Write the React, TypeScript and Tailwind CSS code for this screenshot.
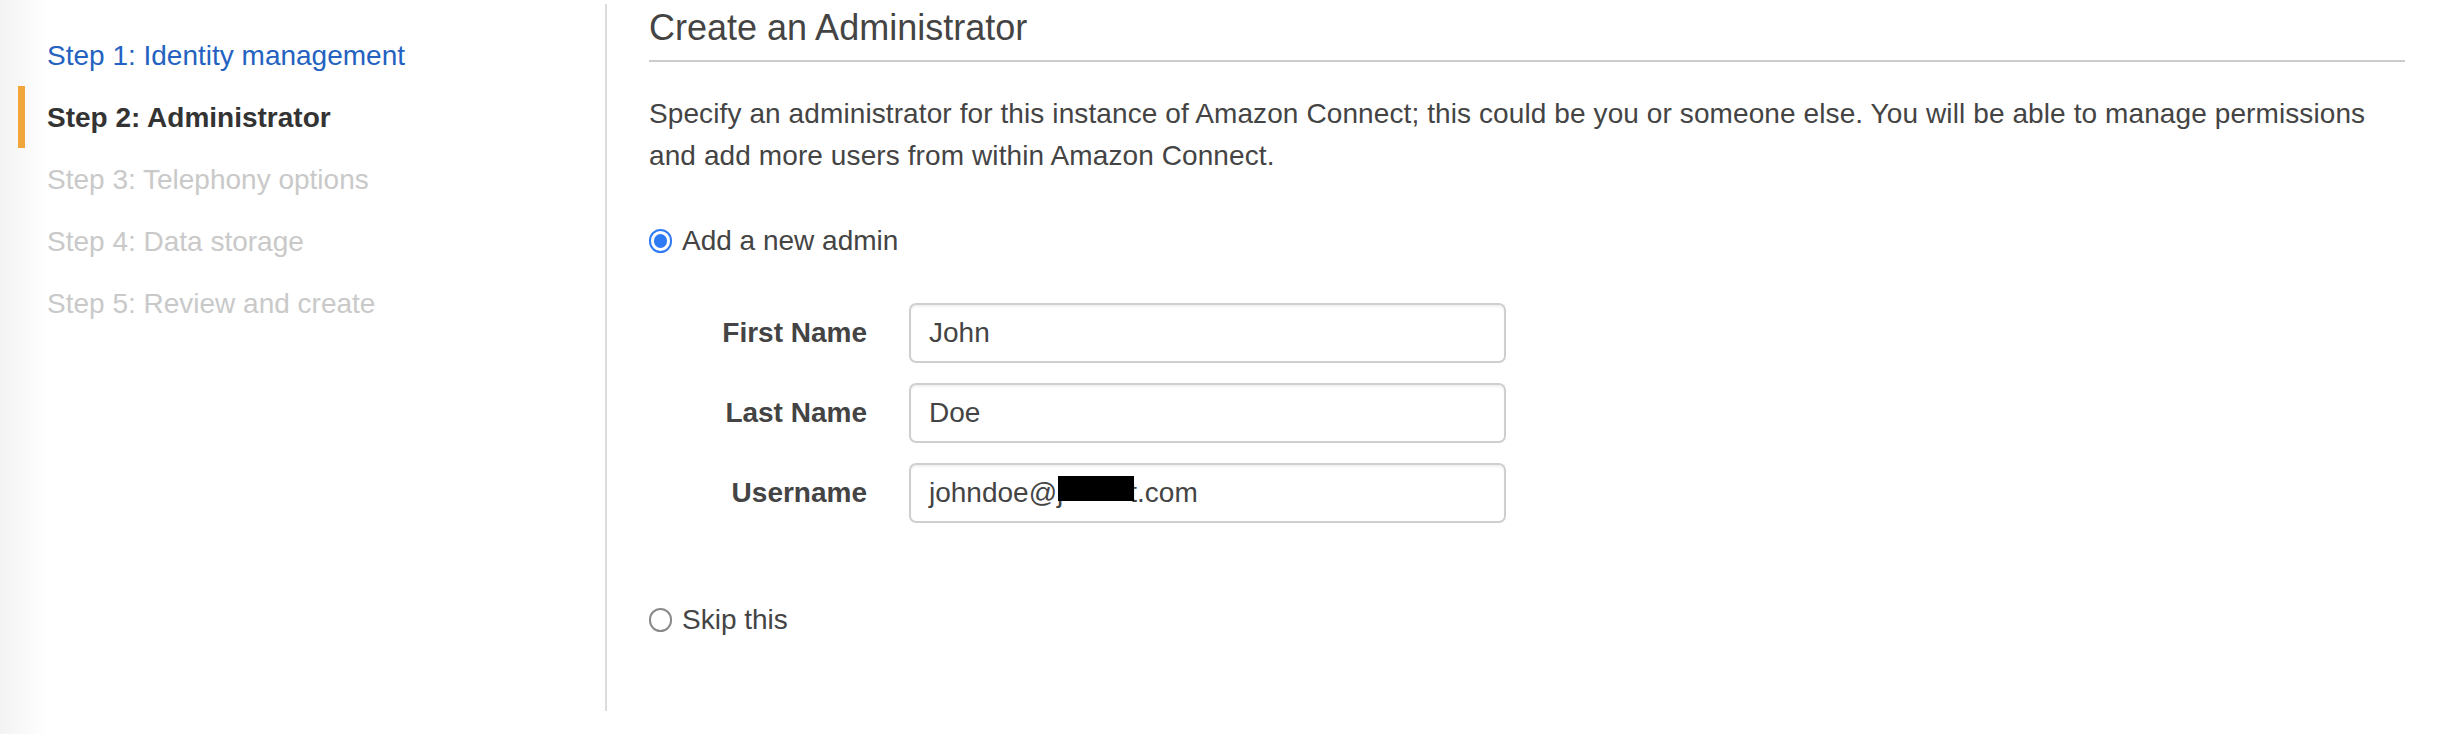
import React from "react";

const steps = [
  { label: "Step 1: Identity management", state: "done" },
  { label: "Step 2: Administrator", state: "active" },
  { label: "Step 3: Telephony options", state: "todo" },
  { label: "Step 4: Data storage", state: "todo" },
  { label: "Step 5: Review and create", state: "todo" },
];

function Radio({ checked }: { checked: boolean }) {
  return checked ? (
    <span className="flex h-[24px] w-[23px] shrink-0 items-center justify-center rounded-full border-[2.5px] border-[#2f7bf5] bg-white">
      <span className="h-[14px] w-[13px] rounded-full bg-[#2f7bf5]" />
    </span>
  ) : (
    <span className="h-[24px] w-[23px] shrink-0 rounded-full border-2 border-[#8a8a8a] bg-white" />
  );
}

function Field({ label, children }: { label: string; children: React.ReactNode }) {
  return (
    <>
      <div className="flex h-[60px] items-center justify-end font-bold text-[#444]">{label}</div>
      <div className="flex h-[60px] items-center rounded-[7px] border-2 border-[#cfcfcf] px-[18px] shadow-[inset_0_2px_2px_rgba(0,0,0,0.06)] text-[#444]">
        {children}
      </div>
    </>
  );
}

export default function App() {
  return (
    <div
      className="flex h-[734px] w-[2440px] bg-white text-[28px]"
      style={{ fontFamily: '"Liberation Sans", Arial, Helvetica, sans-serif' }}
    >
      {/* Wizard steps */}
      <div className="w-[605px] shrink-0 bg-[linear-gradient(to_right,#f3f3f3,#ffffff_48px)] pl-[18px] pt-[24px]">
        {steps.map((s) => (
          <div key={s.label} className="flex h-[62px] items-stretch">
            <div className={s.state === "active" ? "w-[7px] bg-[#f0a63a]" : "w-[7px]"} />
            <div
              className={
                "ml-[22px] flex items-center pt-[2px] leading-none " +
                (s.state === "done"
                  ? "text-[#2462c1]"
                  : s.state === "active"
                    ? "font-bold text-[#333]"
                    : "text-[#c9c9c9]")
              }
            >
              {s.label}
            </div>
          </div>
        ))}
      </div>

      {/* Main content */}
      <div className="mt-[4px] h-[707px] flex-1 border-l-2 border-[#dcdcdc] pl-[42px] pr-[35px]">
        <div className="border-b-2 border-[#cccccc] pt-[4px] pb-[12px]">
          <h1 className="text-[36px] leading-[40px] text-[#444]">Create an Administrator</h1>
        </div>

        <p className="mt-[31px] leading-[42px] tracking-[0.1px] text-[#444]">
          Specify an administrator for this instance of Amazon Connect; this could be you or someone else. You will be able to manage permissions
          <br />
          and add more users from within Amazon Connect.
        </p>

        <label className="mt-[43px] flex h-[42px] items-center gap-[10px] text-[#444]">
          <Radio checked />
          <span>Add a new admin</span>
        </label>

        <div className="mt-[41px] grid grid-cols-[218px_597px] gap-x-[42px] gap-y-[20px]">
          <Field label="First Name">John</Field>
          <Field label="Last Name">Doe</Field>
          <Field label="Username">
            <span>johndoe@</span>
            <span className="relative">
              j
              <span className="absolute left-[1px] top-[4px] h-[25px] w-[76px] bg-black" />
            </span>
            <span className="inline-block w-[66px]" />
            <span>t.com</span>
          </Field>
        </div>

        <label className="mt-[76px] flex h-[42px] items-center gap-[10px] text-[#444]">
          <Radio checked={false} />
          <span>Skip this</span>
        </label>
      </div>
    </div>
  );
}
